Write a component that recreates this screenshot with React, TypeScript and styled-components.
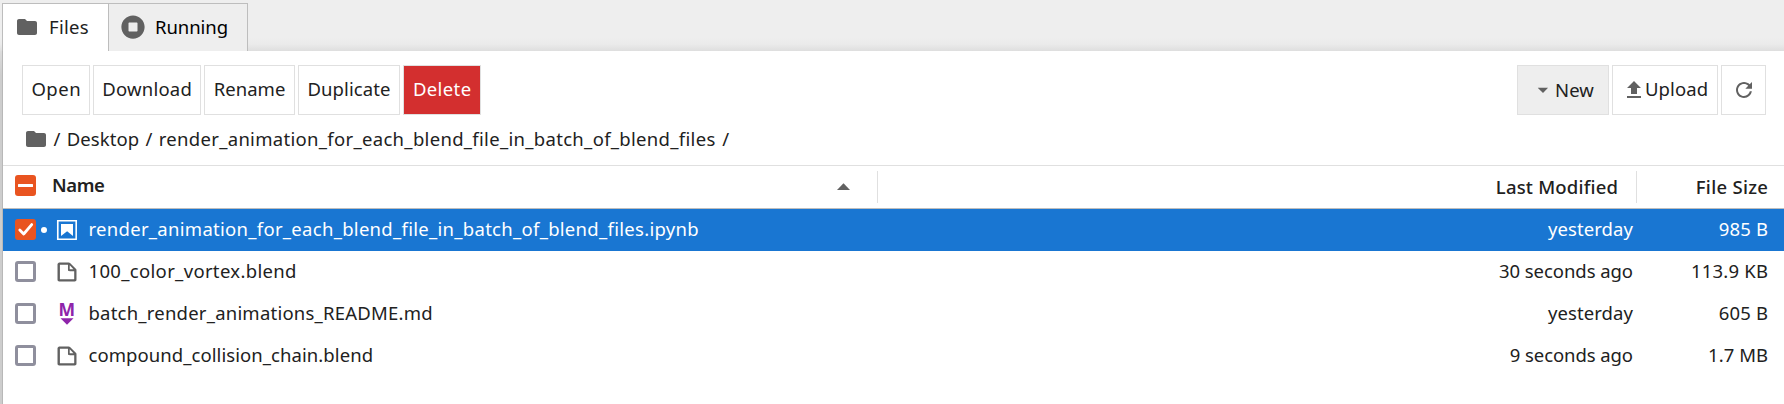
import React from 'react';
import styled, { createGlobalStyle } from 'styled-components';

const Global = createGlobalStyle`
  * { box-sizing: border-box; }
  body {
    margin: 0;
    background: #fff;
    color: #212121;
    font: 18.5px/24px "Noto Sans", "Open Sans", sans-serif;
  }
`;

const Page = styled.div`
  width: 1784px;
  height: 404px;
  overflow: hidden;
  display: flex;
  flex-direction: column;
  background: #eee;
`;

const Label = styled.span<{ $track?: number; $weight?: number }>`
  white-space: nowrap;
  letter-spacing: ${p => p.$track ?? 0.1}px;
  margin-right: ${p => -(p.$track ?? 0.1)}px;
  font-weight: ${p => p.$weight ?? 400};
`;

const TabBar = styled.div`
  display: flex;
  flex: none;
  height: 51px;
  padding: 3px 0 0 2px;
  background: linear-gradient(#eee 38px, #ebebeb 44px, #dedede 51px);
`;

const Tab = styled.div<{ $active?: boolean; $width: number }>`
  display: flex;
  align-items: center;
  width: ${p => p.$width}px;
  height: 48px;
  border: 1px solid #bdbdbd;
  border-bottom: 0;
  ${p => (p.$active ? '' : 'border-left: 0;')}
  padding: 0 0 2px 12px;
  background: ${p => (p.$active ? '#fff' : '#eee')};
  color: ${p => (p.$active ? '#212121' : '#000')};
`;

const TabText = styled(Label)`
  margin-left: 10px;
  padding-top: 1px;
`;

const Body = styled.div`
  display: flex;
  flex: 1;
`;

const Edge = styled.div`
  flex: none;
  width: 3px;
  border-right: 1px solid #b8b8b8;
  background: linear-gradient(#dcdcdc, #cdcdcd 24px);
`;

const Panel = styled.main`
  flex: 1;
  background: #fff;
`;

const Toolbar = styled.div`
  display: flex;
  gap: 3px;
  height: 64px;
  padding: 14px 18px 0 19px;
`;

const Spacer = styled.div`
  flex: 1;
`;

const Button = styled.button<{ $width: number; $tone?: 'danger' | 'muted' }>`
  display: flex;
  align-items: center;
  justify-content: center;
  width: ${p => p.$width}px;
  height: 50px;
  padding: 0 0 2px;
  border: 1px solid #e0e0e0;
  background: ${p => (p.$tone === 'danger' ? '#d32f2f' : p.$tone === 'muted' ? '#eee' : '#fff')};
  color: ${p => (p.$tone === 'danger' ? '#fff' : '#212121')};
  font: inherit;
`;

const NewButton = styled(Button)`
  justify-content: flex-start;
  padding: 0 0 0 13px;
`;

const UploadButton = styled(Button)`
  justify-content: flex-start;
  padding: 0 0 2px 9px;
  svg { margin: 2px -1px 0 0; }
`;

const RefreshButton = styled(Button)`
  padding: 0;
`;

const Breadcrumbs = styled.nav`
  display: flex;
  align-items: center;
  height: 50px;
  padding: 0 0 2px 21px;
`;

const Crumb = styled(Label)<{ $left: number }>`
  margin-left: ${p => p.$left}px;
`;

const Header = styled.div`
  display: flex;
  height: 44px;
  border-top: 1px solid #e0e0e0;
  border-bottom: 1px solid #bdbdbd;
`;

const NameHead = styled.div`
  display: flex;
  align-items: center;
  width: 875px;
  margin: 5px 0 5px;
  padding: 0 27px 2px 12px;
  border-right: 1px solid #e0e0e0;
`;

const NameTitle = styled(Label)`
  flex: 1;
  margin-left: 16px;
  padding-bottom: 2px;
`;

const DateHead = styled.div`
  display: flex;
  flex: 1;
  align-items: center;
  justify-content: flex-end;
  margin: 5px 0;
  padding: 0 18px 0 0;
  border-right: 1px solid #e0e0e0;
`;

const SizeHead = styled.div`
  display: flex;
  align-items: center;
  justify-content: flex-end;
  width: 147px;
  padding: 0 16px 0 0;
`;

const Row = styled.div<{ $selected?: boolean }>`
  display: flex;
  align-items: center;
  height: 42px;
  padding: 0 16px 0 12px;
  background: ${p => (p.$selected ? '#1976d2' : '#fff')};
  color: ${p => (p.$selected ? '#fff' : '#212121')};
`;

const RowText = styled(Label)`
  padding-bottom: 2px;
`;

const FileName = styled(RowText)`
  flex: 1;
  margin-left: 9.5px;
`;

const SizeCell = styled.div`
  display: flex;
  justify-content: flex-end;
  width: 135px;
`;

const Check = styled.span<{ $on?: boolean }>`
  display: flex;
  flex: none;
  width: 21px;
  height: 21px;
  margin-bottom: 1px;
  border: ${p => (p.$on ? '0' : '3px solid #8f8f9d')};
  border-radius: 3px;
  background: ${p => (p.$on ? '#e95420' : '#fff')};
`;

const DotSlot = styled.span`
  display: flex;
  align-items: center;
  justify-content: center;
  width: 16px;
  height: 24px;
  margin-right: 3px;
`;

const Dot = styled.span`
  width: 6px;
  height: 6px;
  border-radius: 50%;
  background: #fff;
`;

const Svg = styled.svg`
  display: block;
  flex: none;
  overflow: visible;
`;

const FolderIcon = () => (
  <Svg width="24" height="24" viewBox="0 0 24 24" fill="#616161">
    <path d="M10 4H4c-1.1 0-1.99.9-1.99 2L2 18c0 1.1.9 2 2 2h16c1.1 0 2-.9 2-2V8c0-1.1-.9-2-2-2h-8l-2-2z" />
  </Svg>
);

const RunningIcon = () => (
  <Svg width="24" height="24" viewBox="0 0 512 512" fill="#616161">
    <path d="M256 8C119 8 8 119 8 256s111 248 248 248 248-111 248-248S393 8 256 8zm96 328c0 8.8-7.2 16-16 16H176c-8.8 0-16-7.2-16-16V176c0-8.8 7.2-16 16-16h160c8.8 0 16 7.2 16 16v160z" />
  </Svg>
);

const CaretDown = () => (
  <Svg width="24" height="24" viewBox="0 0 18 18" fill="#616161">
    <path d="M5.2 7.5L9 11.2l3.8-3.8H5.2z" />
  </Svg>
);

const SortCaret = () => (
  <Svg width="13" height="7" viewBox="0 0 13 7" fill="#616161">
    <path d="M0 7L6.5 0.3L13 7z" />
  </Svg>
);

const UploadIcon = () => (
  <Svg width="24" height="24" viewBox="0 0 24 24" fill="#616161">
    <path d="M9 16h6v-6h4l-7-7-7 7h4zm-4 2h14v2H5z" />
  </Svg>
);

const RefreshIcon = () => (
  <Svg width="24" height="24" viewBox="0 0 18 18" fill="#616161">
    <path d="M9 13.5c-2.49 0-4.5-2.01-4.5-4.5S6.51 4.5 9 4.5c1.24 0 2.36.52 3.17 1.33L10 8h5V3l-1.76 1.76C12.15 3.68 10.66 3 9 3 5.69 3 3.01 5.69 3.01 9S5.69 15 9 15c2.97 0 5.43-2.16 5.9-5h-1.52c-.46 2-2.24 3.5-4.38 3.5z" />
  </Svg>
);

const NotebookIcon = () => (
  <Svg width="24" height="24" viewBox="0 0 22 22" fill="#fff">
    <path d="M18.7 3.3v15.4H3.3V3.3h15.4m1.5-1.5H1.8v18.3h18.3l.1-18.3z" />
    <path d="M16.5 16.5l-5.4-4.3-5.6 4.3v-11h11z" />
  </Svg>
);

const FileIcon = () => (
  <Svg width="24" height="24" viewBox="0 0 22 22" fill="#616161">
    <path d="M19.3 8.2l-5.5-5.5c-.3-.3-.7-.5-1.2-.5H3.9c-.8.1-1.6.9-1.6 1.8v14.1c0 .9.7 1.6 1.6 1.6h14.2c.9 0 1.6-.7 1.6-1.6V9.4c.1-.5-.1-.9-.4-1.2zm-5.8-3.3l3.4 3.6h-3.4V4.9zm3.9 12.7H4.7c-.1 0-.2 0-.2-.2V4.7c0-.2.1-.3.2-.3h7.2v4.4s0 .8.3 1.1c.3.3 1.1.3 1.1.3h4.3v7.2s-.1.2-.2.2z" />
  </Svg>
);

const MarkdownIcon = () => (
  <Svg width="24" height="24" viewBox="0 0 24 24" fill="#8e24aa">
    <text x="3.6" y="14" fontSize="17.5" fontWeight="700" textLength="16.6" lengthAdjust="spacingAndGlyphs">M</text>
    <path d="M5.5 16.3h13L12 22.8z" />
  </Svg>
);

const CheckMark = () => (
  <Svg width="21" height="21" viewBox="0 0 21 21" fill="none" stroke="#fff" strokeWidth="2.8">
    <path d="M4.8 11l3.9 4 8-9.4" strokeLinecap="round" strokeLinejoin="round" />
  </Svg>
);

const MinusMark = () => (
  <Svg width="21" height="21" viewBox="0 0 21 21" fill="#fff">
    <rect x="3" y="9" width="15" height="3" rx="0.5" />
  </Svg>
);

type Entry = {
  name: string; nameTrack: number; icon: React.ReactNode;
  date: string; dateTrack: number; size: string; sizeTrack: number; selected?: boolean;
};

const entries: Entry[] = [
  { name: 'render_animation_for_each_blend_file_in_batch_of_blend_files.ipynb', nameTrack: 0.29, icon: <NotebookIcon />, date: 'yesterday', dateTrack: 0.1, size: '985 B', sizeTrack: 0.15, selected: true },
  { name: '100_color_vortex.blend', nameTrack: 0.33, icon: <FileIcon />, date: '30 seconds ago', dateTrack: -0.06, size: '113.9 KB', sizeTrack: 0.21 },
  { name: 'batch_render_animations_README.md', nameTrack: 0.22, icon: <MarkdownIcon />, date: 'yesterday', dateTrack: 0.1, size: '605 B', sizeTrack: 0.15 },
  { name: 'compound_collision_chain.blend', nameTrack: 0.07, icon: <FileIcon />, date: '9 seconds ago', dateTrack: -0.08, size: '1.7 MB', sizeTrack: 0.05 },
];

export default function App() {
  return (
    <Page>
      <Global />
      <TabBar>
        <Tab $active $width={107}><FolderIcon /><TabText $track={0.3}>Files</TabText></Tab>
        <Tab $width={139}><RunningIcon /><TabText $track={-0.05}>Running</TabText></Tab>
      </TabBar>
      <Body>
        <Edge />
        <Panel>
          <Toolbar>
            <Button $width={68}><Label $track={0.5}>Open</Label></Button>
            <Button $width={108}><Label $track={0.24}>Download</Label></Button>
            <Button $width={91}><Label $track={0.05}>Rename</Label></Button>
            <Button $width={102}><Label $track={0.11}>Duplicate</Label></Button>
            <Button $width={78} $tone="danger"><Label $track={0.38}>Delete</Label></Button>
            <Spacer />
            <NewButton $width={92} $tone="muted"><CaretDown /><Label>New</Label></NewButton>
            <UploadButton $width={106}><UploadIcon /><Label>Upload</Label></UploadButton>
            <RefreshButton $width={45}><RefreshIcon /></RefreshButton>
          </Toolbar>
          <Breadcrumbs>
            <FolderIcon />
            <Crumb $left={5.5}>/</Crumb>
            <Crumb $left={6.3}>Desktop</Crumb>
            <Crumb $left={6.3}>/</Crumb>
            <Crumb $left={6.3} $track={0.31}>render_animation_for_each_blend_file_in_batch_of_blend_files</Crumb>
            <Crumb $left={7}>/</Crumb>
          </Breadcrumbs>
          <Header>
            <NameHead>
              <Check $on><MinusMark /></Check>
              <NameTitle $weight={600} $track={-0.4}>Name</NameTitle>
              <SortCaret />
            </NameHead>
            <DateHead><Label $weight={500} $track={0.2}>Last Modified</Label></DateHead>
            <SizeHead><Label $weight={500} $track={0.3}>File Size</Label></SizeHead>
          </Header>
          {entries.map(e => (
            <Row key={e.name} $selected={e.selected}>
              <Check $on={e.selected}>{e.selected && <CheckMark />}</Check>
              <DotSlot>{e.selected && <Dot />}</DotSlot>
              {e.icon}
              <FileName $track={e.nameTrack}>{e.name}</FileName>
              <RowText $track={e.dateTrack}>{e.date}</RowText>
              <SizeCell><RowText $track={e.sizeTrack}>{e.size}</RowText></SizeCell>
            </Row>
          ))}
        </Panel>
      </Body>
    </Page>
  );
}
